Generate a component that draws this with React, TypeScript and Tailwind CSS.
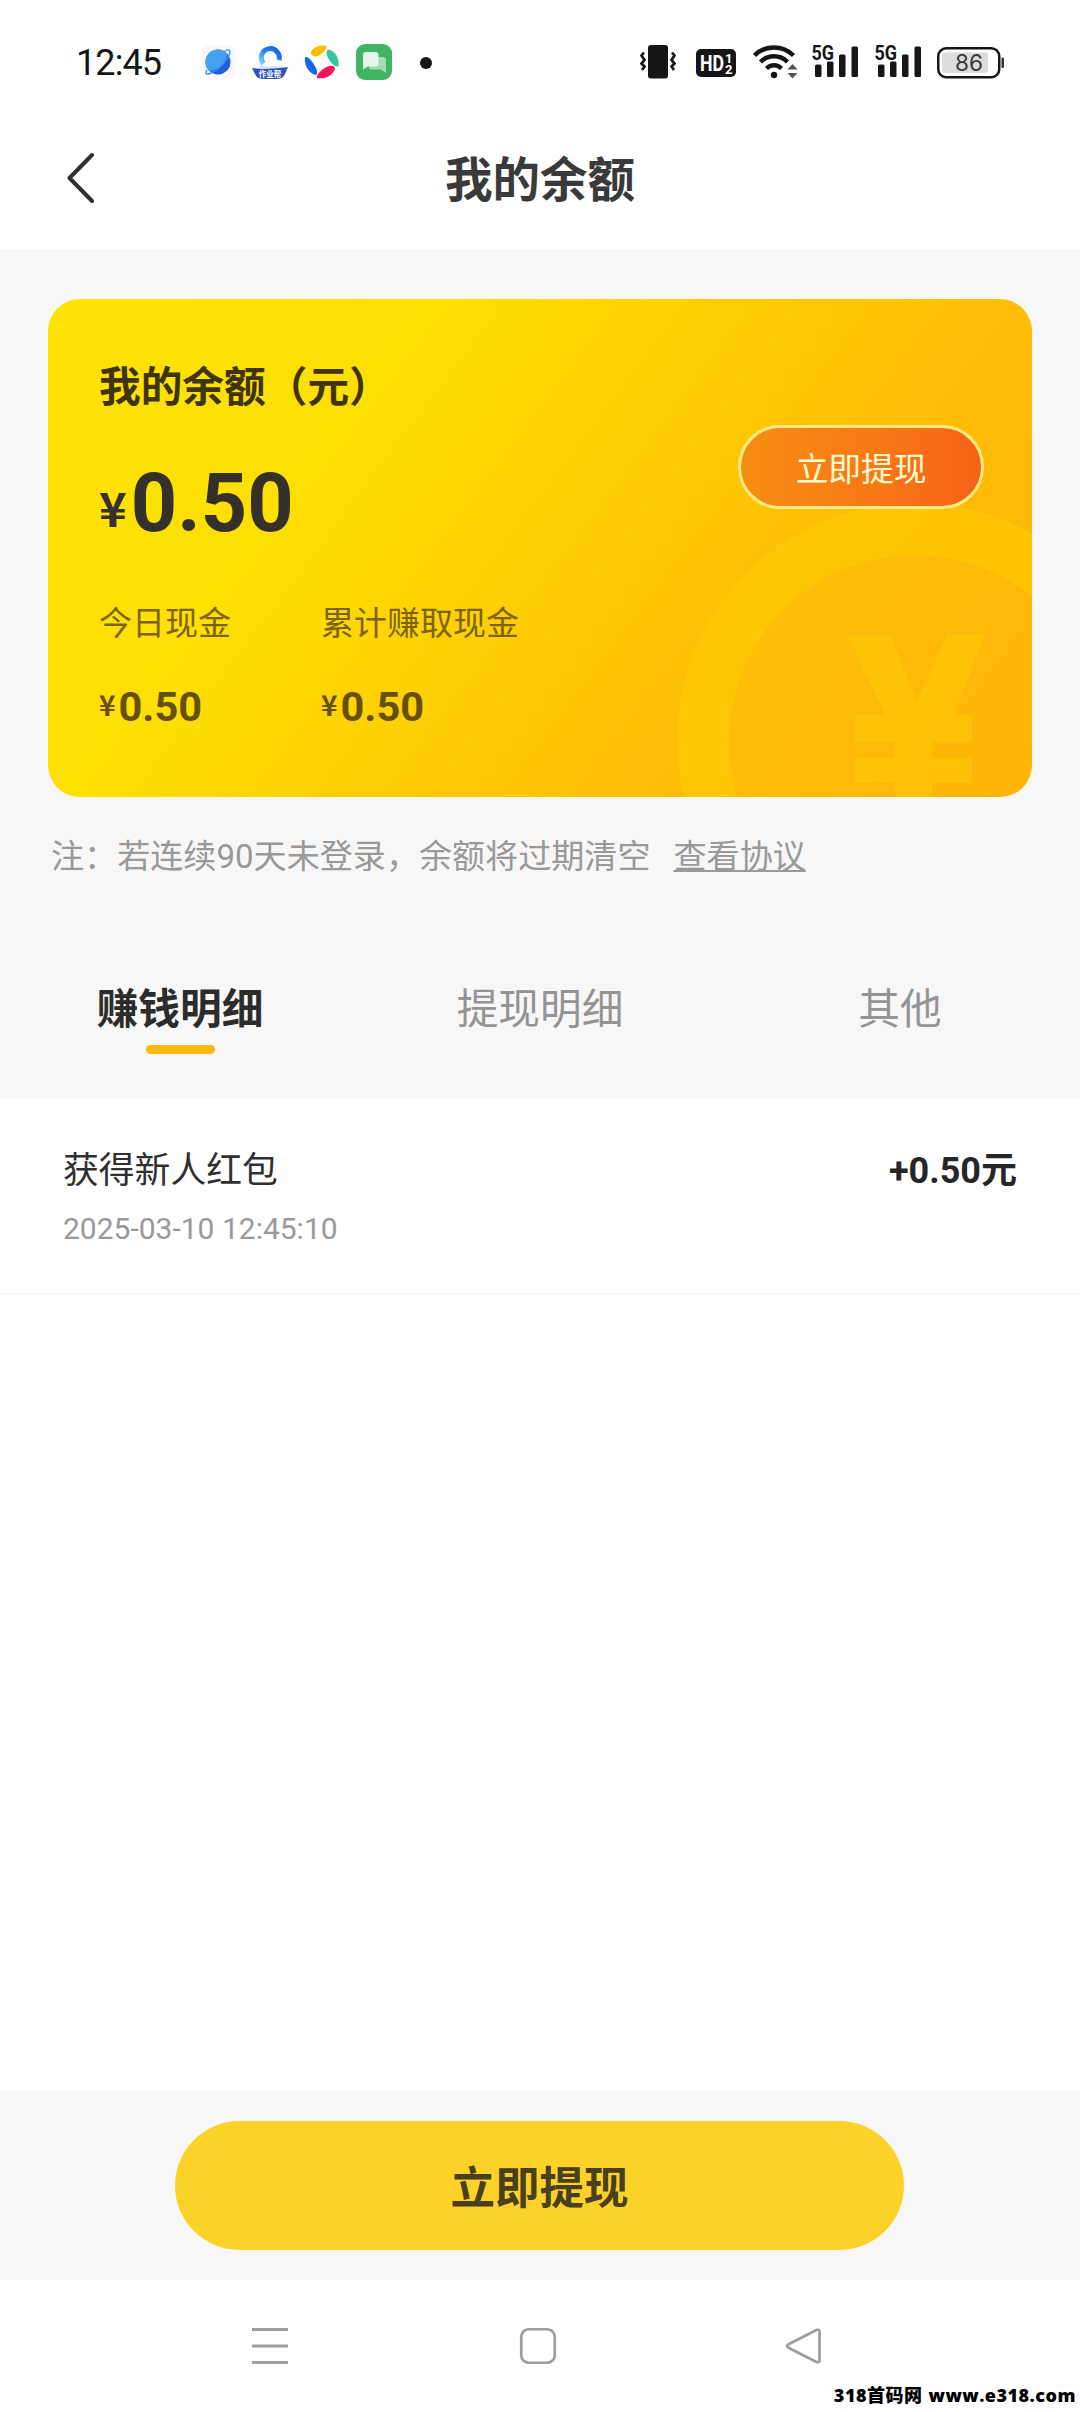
import React from "react";

function PlanetIcon() {
  return (
    <svg width="36" height="36" viewBox="0 0 36 36" className="shrink-0">
      <rect x="1" y="1" width="34" height="34" rx="8" fill="#f8f8fa" />
      <circle cx="18" cy="18" r="12.500" fill="#1f62d8" />
      <path d="M27 9.500A12.500 12.500 0 0 0 5.500 18c0 4 1.500 7 3.500 9C18 26 26 20 27 9.500z" fill="#45a0f6" />
      <path d="M25 7c3.500-2 6-1.500 4.500 3-2 5-5 9-9 12.500-5 4.500-9 7-12.500 7.500-2 .3-3-1-1-4" fill="none" stroke="#3f8fe8" strokeWidth="1.400" />
    </svg>
  );
}

function BrowserIcon() {
  return (
    <svg width="38" height="36" viewBox="0 0 38 36" className="shrink-0">
      <defs>
        <linearGradient id="ring" x1="0" y1="1" x2="1" y2="0">
          <stop offset="0" stopColor="#7fd0ff" />
          <stop offset="0.5" stopColor="#2384f0" />
          <stop offset="1" stopColor="#1560d8" />
        </linearGradient>
      </defs>
      <path d="M12.500 19.500A9 9 0 1 1 28 16" fill="none" stroke="url(#ring)" strokeWidth="5" />
      <path d="M7 20c8 3 18 3 25 1l-1 3H9z" fill="#cfe8fa" />
      <path d="M1 24q18 2 36-1l-3 7q-2 5-8 5H12q-6 0-8-5z" fill="#2f55b5" />
      <text x="19" y="32.500" textAnchor="middle" fontSize="7.500" fontWeight="700" fill="#fff" fontFamily="Noto Sans CJK SC, sans-serif">
        作业帮
      </text>
    </svg>
  );
}

function PinwheelIcon() {
  return (
    <svg width="36" height="36" viewBox="0 0 36 36" className="shrink-0">
      <path d="M7 7.500C10 2.500 17 .5 22.500 2c1 2-2 6-6.500 9-3.500 2.500-10 1.500-9-3.500z" fill="#f6c000" />
      <path d="M24.500 5.500C31 7 35.500 14 34.500 22c-2 2-6-1-9.500-6.500-2.500-4-4-9-.5-10z" fill="#34c79b" />
      <path d="M31 25c-3 7-10 10.500-18 9-1-2 2-6 7-9.500 4-3 11-4.500 11 .5z" fill="#ee1757" />
      <path d="M11.500 31C4.500 29 0 21 1 13.500c2-1.500 5.500 1.500 9 7 2.500 4 5 9.500 1.500 10.500z" fill="#1467e6" />
    </svg>
  );
}

function ChatIcon() {
  return (
    <svg width="36" height="36" viewBox="0 0 36 36" className="shrink-0">
      <rect width="36" height="36" rx="9" fill="#3fb564" />
      <path d="M13 13h14.500q2.500 0 2.500 2.500V29l-5-3.500H15q-2 0-2-2z" fill="#a3dcb4" />
      <path d="M9.500 8H20q2.500 0 2.500 2.500V20q0 2.500-2.500 2.500h-8L7 25.500v-15Q7 8 9.500 8z" fill="#e4f5e9" />
    </svg>
  );
}

function VibrateIcon() {
  return (
    <svg width="36" height="36" viewBox="0 0 36 36" className="shrink-0">
      <rect x="8" y="1" width="20" height="33.500" rx="3" fill="#161616" />
      <path d="M4 8.500l-2.500 3 3 4.500-3 3.500 3 3-2.500 3.500M32 8.500l2.500 3-3 4.500 3 3.500-3 3 2.500 3.500" fill="none" stroke="#161616" strokeWidth="2.700" />
    </svg>
  );
}

function HdIcon() {
  return (
    <svg width="40" height="28" viewBox="0 0 40 28" className="shrink-0">
      <rect width="40" height="28" rx="5" fill="#161616" />
      <g fill="#fff" fontFamily="Roboto, sans-serif" fontWeight="700">
        <text x="4" y="21.500" fontSize="21.500" textLength="24" lengthAdjust="spacingAndGlyphs">HD</text>
        <text x="29" y="13.500" fontSize="13" textLength="7.500" lengthAdjust="spacingAndGlyphs">1</text>
        <text x="29" y="25" fontSize="13" textLength="7.500" lengthAdjust="spacingAndGlyphs">2</text>
      </g>
    </svg>
  );
}

function WifiIcon() {
  return (
    <svg width="46" height="36" viewBox="0 0 46 36" className="shrink-0">
      <g fill="none" stroke="#161616" strokeWidth="4.500">
        <path d="M1.500 11.500a27.500 27.500 0 0 1 39 0" />
        <path d="M7.500 18a19 19 0 0 1 27 0" />
        <path d="M13.500 24.500a10.500 10.500 0 0 1 15 0" />
      </g>
      <circle cx="21" cy="31" r="3.200" fill="#161616" />
      <path d="M39.500 20l5 5.500h-10zM39.500 34.500l5-5.500h-10z" fill="#555" />
    </svg>
  );
}

function SignalIcon() {
  return (
    <svg width="47" height="48" viewBox="0 -6 47 48" className="shrink-0">
      <text x="-0.500" y="16" fontSize="21" fontWeight="700" fill="#161616" fontFamily="Roboto, sans-serif" textLength="22.500" lengthAdjust="spacingAndGlyphs">
        5G
      </text>
      <g fill="#161616">
        <rect x="3" y="20.500" width="6.500" height="12.500" rx="1.500" />
        <rect x="15" y="17.500" width="6.500" height="15.500" rx="1.500" />
        <rect x="27" y="10.500" width="6.500" height="22.500" rx="1.500" />
        <rect x="39.500" y="2.500" width="6.500" height="30.500" rx="1.500" />
      </g>
    </svg>
  );
}

function BatteryIcon() {
  return (
    <svg width="68" height="32" viewBox="0 0 68 32" className="shrink-0">
      <rect x="1.250" y="1.250" width="61" height="29" rx="8" fill="#fff" stroke="#161616" strokeWidth="2.500" />
      <rect x="5" y="5.500" width="46" height="20.500" rx="3" fill="#dcdcdc" />
      <rect x="64.500" y="10.500" width="2.500" height="10.500" rx="1" fill="#333" />
      <text x="32" y="24" textAnchor="middle" fontSize="23" fill="#3a3a3a" fontFamily="Inter, sans-serif" textLength="28" lengthAdjust="spacingAndGlyphs">
        86
      </text>
    </svg>
  );
}

function StatusBar() {
  return (
    <div className="flex h-[124px] items-center pl-[76px] pr-[75px]">
      <span className="mt-[2px] w-[124px] font-['Roboto',sans-serif] text-[36px] leading-none tracking-[-0.9px] text-[#161616]">12:45</span>
      <div className="flex items-center">
        <PlanetIcon />
        <div className="ml-[15px] flex"><BrowserIcon /></div>
        <div className="ml-[15px] flex"><PinwheelIcon /></div>
        <div className="ml-[16px] flex"><ChatIcon /></div>
        <div className="ml-[28px] mt-[1px] size-3 rounded-full bg-[#161616]" />
      </div>
      <div className="ml-auto flex items-center">
        <VibrateIcon />
        <div className="ml-[20px] mt-[2px] flex"><HdIcon /></div>
        <div className="ml-[17px] flex"><WifiIcon /></div>
        <div className="ml-[13px] flex"><SignalIcon /></div>
        <div className="ml-[16px] flex"><SignalIcon /></div>
        <div className="ml-[15px] mt-[1px] flex"><BatteryIcon /></div>
      </div>
    </div>
  );
}

function Header() {
  return (
    <header className="grid h-[125px] grid-cols-[200px_1fr_200px] items-center">
      <svg width="28" height="52" viewBox="0 0 28 52" className="mb-[18px] ml-[67px]">
        <path d="M25 3L2.500 26L25 49" fill="none" stroke="#303030" strokeWidth="4" strokeLinecap="round" strokeLinejoin="round" />
      </svg>
      <h1 className="mb-[12px] text-center text-[47.500px] font-bold leading-[60px] text-[#3a3a3a]">我的余额</h1>
    </header>
  );
}

function SmallAmount({ label }: { label: string }) {
  return (
    <div className="w-[222px] whitespace-nowrap">
      <div className="text-[33px] leading-[40px] text-[#7d6310]">{label}</div>
      <div className="mt-[39px] flex h-[48px] font-bold leading-[48px] text-[#65500f]">
        <span className="-mt-[3px] font-['Noto_Sans_CJK_SC',sans-serif] text-[28px]">¥</span>
        <span className="ml-[3px] text-[41.500px]">0.50</span>
      </div>
    </div>
  );
}

function BalanceCard() {
  return (
    <section className="relative mx-12 h-[498px] overflow-hidden rounded-[32px] bg-[linear-gradient(127deg,#fde305_0%,#fddf02_30%,#ffc805_58%,#ffbd08_73%,#ffb507_100%)]">
      <svg width="400" height="300" viewBox="0 0 400 300" className="absolute bottom-0 right-0">
        <circle cx="283" cy="244" r="212" fill="none" stroke="#ffcb05" strokeOpacity="0.65" strokeWidth="52" />
        <path d="M215 138h43l27 66l30-66h38l-31 80h18v27h-40v16h40v25h-40v14h-37v-14h-40v-25h40v-16h-40v-27h31z" fill="#ffc808" fillOpacity="0.65" />
      </svg>
      <div className="relative flex h-full justify-between pl-[51px] pr-[48px]">
        <div>
          <h2 className="mt-[64px] text-[41.700px] font-bold leading-[50px] text-[#40340f]">我的余额（元）</h2>
          <div className="mt-[43px] flex h-[96px] font-bold leading-[96px] text-[#35312a]">
            <span className="mt-[3px] font-['Noto_Sans_CJK_SC',sans-serif] text-[47px]">¥</span>
            <span className="ml-[4px] text-[81px]">0.50</span>
          </div>
          <div className="mt-[52px] flex">
            <SmallAmount label="今日现金" />
            <SmallAmount label="累计赚取现金" />
          </div>
        </div>
        <button className="mt-[126px] h-[84px] w-[246px] rounded-full border-[3px] border-[#ffeb82] bg-[linear-gradient(90deg,#f58e12,#fa7615_60%,#f56118)] pt-[6px] text-[32.700px] leading-none text-[#fffbd0]">
          立即提现
        </button>
      </div>
    </section>
  );
}

function Tabs() {
  return (
    <nav className="mt-[105px] grid grid-cols-3 text-center text-[41.700px] leading-[56px] text-[#949494]">
      <div className="flex flex-col items-center">
        <span className="font-bold text-[#2c2c2c]">赚钱明细</span>
        <span className="mt-[7px] h-[9px] w-[69px] rounded-full bg-[#fdb80c]" />
      </div>
      <div>提现明细</div>
      <div>其他</div>
    </nav>
  );
}

function NavBar() {
  return (
    <footer className="relative flex h-[132px] items-center justify-between bg-[#fefefe] pl-[250px] pr-[257px]">
      <svg width="40" height="40" viewBox="0 0 40 40">
        <path d="M2 3.500h36M2 20h36M2 36.500h36" stroke="#9d9d9d" strokeWidth="3" />
      </svg>
      <svg width="40" height="40" viewBox="0 0 40 40">
        <rect x="4.250" y="3.250" width="33.500" height="33.500" rx="7.500" fill="none" stroke="#9d9d9d" strokeWidth="2.700" />
      </svg>
      <svg width="40" height="40" viewBox="0 0 40 40">
        <path d="M33.500 4L5 18.500q-2 1.500 0 3L33.500 36q3 1 3-2V6q0-3-3-2z" fill="none" stroke="#9d9d9d" strokeWidth="2.700" strokeLinejoin="round" />
      </svg>
      <div className="absolute bottom-[4px] right-[4px] flex items-baseline whitespace-nowrap font-['Open_Sans','Noto_Sans_CJK_SC',sans-serif] text-[18px] font-extrabold leading-[26px] tracking-[0.5px] text-black">
        <span>318首码网</span>
        <span className="ml-[6px]">www.e318.com</span>
      </div>
    </footer>
  );
}

export default function App() {
  return (
    <div className="flex h-[2412px] w-[1080px] flex-col overflow-hidden bg-[#fefefe] font-['Roboto','Noto_Sans_CJK_SC',sans-serif]">
      <StatusBar />
      <Header />
      <main className="h-[849px] bg-[#f7f7f7] pt-[50px]">
        <BalanceCard />
        <p className="mt-[40px] flex pl-[51px] text-[33.100px] leading-[40px] text-[#999]">
          <span>注：若连续90天未登录，余额将过期清空</span>
          <a className="ml-[23px] underline decoration-2 underline-offset-[2px]">查看协议</a>
        </p>
        <Tabs />
      </main>
      <section className="flex h-[197px] justify-between border-b-2 border-[#f8f8f8] pl-[63px] pr-[63px] pt-[50px]">
        <div>
          <div className="text-[35.800px] leading-[46px] text-[#303030]">获得新人红包</div>
          <div className="mt-[15px] text-[30px] leading-[40px] text-[#999]">2025-03-10 12:45:10</div>
        </div>
        <div className="text-[36px] font-bold leading-[46px] text-[#262626]">+0.50元</div>
      </section>
      <div className="grow" />
      <div className="flex h-[189px] items-center justify-center bg-[#f7f7f7]">
        <button className="mr-[1px] h-[129px] w-[729px] rounded-full bg-[#fcd228] pt-[8px] text-[44.500px] font-bold leading-none text-[#4a4020]">立即提现</button>
      </div>
      <NavBar />
    </div>
  );
}
